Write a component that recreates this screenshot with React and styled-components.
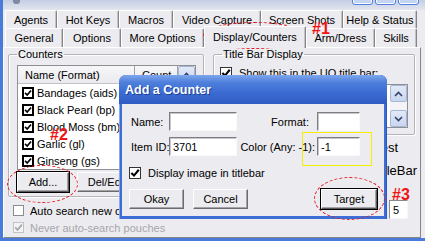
import React from "react";
import styled, { createGlobalStyle, css } from "styled-components";

const BG = "#ecebef";
const FRAME_BLUE = "#4a7bd9";

const GlobalStyle = createGlobalStyle`
  html, body { margin: 0; padding: 0; background: ${BG}; }
  body { font-family: "Liberation Sans", Arial, sans-serif; font-size: 11px; color: #000; }
  * { box-sizing: border-box; }
`;

const Screen = styled.div`
  position: relative;
  width: 425px;
  height: 241px;
  overflow: hidden;
  background: ${BG};
`;

const Frame = styled.div`
  display: flex;
  flex-direction: column;
  width: 100%;
  height: 100%;
  border-left: 3px solid ${FRAME_BLUE};
  border-bottom: 3px solid ${FRAME_BLUE};
`;

const TopStrip = styled.div`
  flex: none;
  height: 10px;
  display: flex;
  align-items: flex-start;
  gap: 2px;
  padding: 0 6px 0 10px;
  overflow: hidden;
  background: linear-gradient(#c3cee4, #e3e5ee);
`;

const AppIcon = styled.div`
  width: 7px;
  height: 4px;
  border-radius: 0 0 3px 3px;
  background: #7d8aa2;
  filter: blur(0.6px);
  margin-right: auto;
`;

const WinBtn = styled.div`
  width: 21px;
  height: 20px;
  margin-top: -15px;
  border: 1px solid #4f7fe0;
  border-radius: 3px;
  background: #c4d5f3;
  box-shadow: inset 0 0 0 1px #fff;
`;

const TabArea = styled.div`
  flex: none;
  display: flex;
  flex-direction: column;
  padding-left: 2px;
`;

const TabRow = styled.div`
  display: flex;
  height: ${(p) => p.$h}px;
`;

const Tab = styled.div`
  flex: none;
  width: ${(p) => p.$w}px;
  height: 100%;
  display: flex;
  align-items: center;
  justify-content: center;
  white-space: nowrap;
  background: ${BG};
  border-top: 1px solid #fff;
  border-left: 1px solid #fff;
  border-right: 1px solid #858585;
  border-radius: 2px 2px 0 0;
  box-shadow: inset -1px 0 #c4c4c8;
  ${(p) =>
    p.$active &&
    css`
      position: relative;
      z-index: 1;
      height: calc(100% + 3px);
      margin-top: -2px;
      padding-bottom: 2px;
    `}
`;

const Panel = styled.div`
  flex: 1;
  margin-right: 4px;
  display: grid;
  grid-template-columns: 196px 207px;
  column-gap: 9px;
  align-items: start;
  padding-left: 4px;
  border-top: 1px solid #fff;
  border-left: 1px solid #fff;
  border-right: 1px solid #858585;
  border-bottom: 1px solid #858585;
`;

const Column = styled.div`
  display: flex;
  flex-direction: column;
`;

const GroupBox = styled.fieldset`
  margin: 0 ${(p) => p.$mr || 0}px 0 0;
  padding: 0 ${(p) => p.$px}px ${(p) => p.$pb}px;
  border: 1px solid #b4b3b8;
  border-radius: 2px;
  box-shadow: inset 1px 1px #fff, 1px 1px #fff;
  min-width: 0;
`;

const Legend = styled.legend`
  padding: 0 1px;
  margin-left: ${(p) => p.$ml || 0}px;
  line-height: 13px;
  font-size: 11px;
`;

const ListView = styled.div`
  margin-top: 4px;
  width: 179px;
  height: 105px;
  border: 1px solid #8e8f93;
  background: #fff;
  display: grid;
  grid-template-columns: 160px 17px;
`;

const ListMain = styled.div`
  display: flex;
  flex-direction: column;
`;

const Header = styled.div`
  display: grid;
  grid-template-columns: 117px 43px;
  height: 18px;
`;

const HeaderCell = styled.div`
  display: flex;
  align-items: center;
  padding-left: ${(p) => p.$pl}px;
  background: linear-gradient(#f7f7f9, #ebeaee);
  border-bottom: 1px solid #c3c3c7;
  border-right: 1px solid #a3a3a8;
  white-space: nowrap;
  overflow: hidden;
`;

const Row = styled.div`
  height: 17px;
  display: flex;
  align-items: center;
  gap: 3px;
  padding-left: 4px;
  white-space: nowrap;
`;

const ScrollBar = styled.div`
  display: flex;
  flex-direction: column;
  justify-content: space-between;
  background: #f4f4f7;
`;

const ScrollBtn = styled.div`
  height: 17px;
  display: flex;
  align-items: center;
  justify-content: center;
  background: linear-gradient(#e2e9f7, #c9d6ef);
  border: 1px solid #a6b6d6;
  border-radius: 2px;
`;

const ButtonRow = styled.div`
  display: flex;
  gap: ${(p) => p.$gap || 0}px;
  margin-top: ${(p) => p.$mt || 0}px;
`;

const Button = styled.div`
  flex: none;
  width: ${(p) => p.$w}px;
  height: 20px;
  display: flex;
  align-items: center;
  justify-content: center;
  white-space: nowrap;
  background: ${BG};
  border-top: 1px solid #fff;
  border-left: 1px solid #fff;
  border-right: 1px solid #6b6b6b;
  border-bottom: 1px solid #6b6b6b;
  box-shadow: inset -1px -1px #a3a3a8;
  margin-left: ${(p) => (p.$push ? "auto" : `${p.$ml || 0}px`)};
  ${(p) =>
    p.$default &&
    css`
      outline: 1px solid #000;
      outline-offset: 0;
      border-color: #fff #5a5a5a #5a5a5a #fff;
    `}
`;

const CheckRow = styled.div`
  display: flex;
  align-items: center;
  gap: ${(p) => p.$gap || 6}px;
  height: 13px;
  margin-top: ${(p) => p.$mt || 0}px;
  margin-left: ${(p) => p.$ml || 0}px;
  white-space: nowrap;
  color: ${(p) => (p.$disabled ? "#a7a6ab" : "#000")};
`;

const Box = styled.span`
  flex: none;
  width: ${(p) => p.$size}px;
  height: ${(p) => p.$size}px;
  display: inline-flex;
  align-items: center;
  justify-content: center;
  border: ${(p) => p.$bw}px solid ${(p) => p.$color};
  background: ${(p) => (p.$disabled ? "#f3f3f5" : "#fff")};
`;

function Check({ checked = true, disabled, size = 11, bw = 1, color = "#1d1d1d" }) {
  const inner = size - bw * 2;
  return (
    <Box $size={size} $bw={bw} $color={disabled ? "#c2c2c6" : color} $disabled={disabled}>
      {checked && (
        <svg width={inner} height={inner} viewBox="0 0 9 9">
          <path
            d="M1.2 4.4 L3.6 6.8 L7.9 1.6"
            fill="none"
            stroke={disabled ? "#a9a9ad" : "#000"}
            strokeWidth="1.9"
          />
        </svg>
      )}
    </Box>
  );
}

function Chevron({ up }) {
  return (
    <svg width="9" height="6" viewBox="0 0 9 6">
      <path
        d={up ? "M1 5 L4.5 1.5 L8 5" : "M1 1 L4.5 4.5 L8 1"}
        fill="none"
        stroke="#33416a"
        strokeWidth="1.6"
      />
    </svg>
  );
}

const TextArea = styled.div`
  margin: 5px 0 0 4px;
  height: 44px;
  border: 1px solid #8e8f93;
  background: #fff;
  display: flex;
  justify-content: flex-end;
`;

const SideScroll = styled.div`
  width: 17px;
  display: flex;
  flex-direction: column;
  justify-content: space-between;
  background: #f4f4f7;
`;

const TailRow = styled.div`
  display: flex;
  justify-content: flex-end;
  align-items: center;
  height: 13px;
  padding-right: ${(p) => p.$pr}px;
  margin-top: ${(p) => p.$mt}px;
  white-space: nowrap;
  font-size: 13px;
`;

const TailBox = styled.div`
  align-self: flex-end;
  margin: ${(p) => p.$mt}px 12px 0 0;
  width: 19px;
  height: 19px;
  display: flex;
  align-items: center;
  padding-left: 3px;
  background: #fff;
  border-top: 1px solid #8a8a8e;
  border-left: 1px solid #8a8a8e;
  border-right: 1px solid #f7f7f7;
  border-bottom: 1px solid #f7f7f7;
`;

/* ---------- Dialog ---------- */

const Dialog = styled.div`
  position: absolute;
  left: 119px;
  top: 75px;
  width: 268px;
  height: 144px;
  display: flex;
  flex-direction: column;
  border-radius: 7px 7px 0 0;
  overflow: hidden;
  background: #3d6ed6;
  box-shadow: inset 1px 0 #86a9ea, inset -1px 0 #2c58c0;
`;

const TitleBar = styled.div`
  flex: none;
  height: 29px;
  display: flex;
  align-items: center;
  padding-left: 6px;
  color: #fff;
  font-size: 12.5px;
  font-weight: bold;
  text-shadow: 1px 1px 0 #1d3f94;
  background: linear-gradient(#7ea6ec 0%, #4f80dc 25%, #3c6cd2 60%, #2f5cc4 100%);
`;

const DialogBody = styled.div`
  flex: 1;
  margin: 0 3px 3px;
  background: ${BG};
  padding: 8px 7px 0 7px;
  display: flex;
  flex-direction: column;
`;

const FormGrid = styled.div`
  display: grid;
  grid-template-columns: 38px 68px 80px 43px;
  grid-auto-rows: 19px;
  row-gap: 6px;
  margin-left: 2px;
  align-items: center;
`;

const Label = styled.span`
  white-space: nowrap;
  ${(p) =>
    p.$right &&
    css`
      justify-self: end;
      padding-right: ${p.$pr || 2}px;
    `}
`;

const Input = styled.div`
  height: 19px;
  display: flex;
  align-items: center;
  padding-left: 3px;
  background: #fff;
  border-top: 1px solid #7d7d82;
  border-left: 1px solid #7d7d82;
  border-right: 1px solid #fafafa;
  border-bottom: 1px solid #fafafa;
  box-shadow: inset 1px 1px #c7c7cc;
`;

/* ---------- Annotations ---------- */

const Ellipse = styled.div`
  position: absolute;
  left: ${(p) => p.$x}px;
  top: ${(p) => p.$y}px;
  width: ${(p) => p.$w}px;
  height: ${(p) => p.$h}px;
  border: 1px dashed #e8141c;
  border-radius: 50%;
`;

const Mark = styled.div`
  position: absolute;
  left: ${(p) => p.$x}px;
  top: ${(p) => p.$y}px;
  color: #f01414;
  font-family: "Liberation Sans", Arial, sans-serif;
  font-weight: bold;
  font-size: 16px;
  line-height: 16px;
`;

const Highlight = styled.div`
  position: absolute;
  left: 302px;
  top: 132px;
  width: 70px;
  height: 34px;
  border: 1px solid #f4f000;
`;

const tabsBack = [
  ["Agents", 52],
  ["Hot Keys", 62],
  ["Macros", 54],
  ["Video Capture", 88],
  ["Screen Shots", 82],
  ["Help & Status", 74],
];

const tabsFront = [
  ["General", 58],
  ["Options", 58],
  ["More Options", 83],
  ["Display/Counters", 102, true],
  ["Arm/Dress", 69],
  ["Skills", 42],
];

const counters = [
  "Bandages (aids)",
  "Black Pearl (bp)",
  "Blood Moss (bm)",
  "Garlic (gl)",
  "Ginseng (gs)",
];

export default function App() {
  return (
    <>
      <GlobalStyle />
      <Screen>
        <Frame>
          <TopStrip>
            <AppIcon />
            <WinBtn />
            <WinBtn />
            <WinBtn />
          </TopStrip>
          <TabArea>
            <TabRow $h={18}>
              {tabsBack.map(([t, w]) => (
                <Tab key={t} $w={w}>
                  {t}
                </Tab>
              ))}
            </TabRow>
            <TabRow $h={19}>
              {tabsFront.map(([t, w, a]) => (
                <Tab key={t} $w={w} $active={a}>
                  {t}
                </Tab>
              ))}
            </TabRow>
          </TabArea>
          <Panel>
            <Column>
              <GroupBox $px={8} $pb={4}>
                <Legend>Counters</Legend>
                <ListView>
                  <ListMain>
                    <Header>
                      <HeaderCell $pl={7}>Name (Format)</HeaderCell>
                      <HeaderCell $pl={7}>Count</HeaderCell>
                    </Header>
                    {counters.map((c) => (
                      <Row key={c}>
                        <Check size={12} bw={2} color="#000" />
                        {c}
                      </Row>
                    ))}
                  </ListMain>
                  <ScrollBar>
                    <ScrollBtn>
                      <Chevron up />
                    </ScrollBtn>
                    <ScrollBtn>
                      <Chevron />
                    </ScrollBtn>
                  </ScrollBar>
                </ListView>
                <ButtonRow $mt={2}>
                  <Button $w={52} $default>
                    Add...
                  </Button>
                  <Button $w={60} $ml={8}>
                    Del/Edit
                  </Button>
                </ButtonRow>
              </GroupBox>
              <CheckRow $mt={7} $ml={5}>
                <Check checked={false} color="#8c8c90" />
                Auto search new containers
              </CheckRow>
              <CheckRow $mt={4} $ml={5} $disabled>
                <Check disabled />
                Never auto-search pouches
              </CheckRow>
            </Column>
            <Column>
              <GroupBox $px={6} $pb={6} $mr={5}>
                <Legend $ml={2}>Title Bar Display</Legend>
                <CheckRow $mt={5} $gap={7}>
                  <Check size={12} color="#333" />
                  Show this in the UO title bar:
                </CheckRow>
                <TextArea>
                  <SideScroll>
                    <ScrollBtn>
                      <Chevron up />
                    </ScrollBtn>
                    <ScrollBtn>
                      <Chevron />
                    </ScrollBtn>
                  </SideScroll>
                </TextArea>
              </GroupBox>
              <TailRow $pr={22} $mt={6}>
                Highest
              </TailRow>
              <TailRow $pr={3} $mt={10}>
                TitleBar
              </TailRow>
              <TailBox $mt={23}>5</TailBox>
            </Column>
          </Panel>
        </Frame>

        <Dialog>
          <TitleBar>Add a Counter</TitleBar>
          <DialogBody>
            <FormGrid>
              <Label>Name:</Label>
              <Input />
              <Label $right $pr={8}>
                Format:
              </Label>
              <Input />
              <Label>Item ID:</Label>
              <Input>3701</Input>
              <Label $right>Color (Any: -1):</Label>
              <Input>-1</Input>
            </FormGrid>
            <CheckRow $mt={10} $gap={7}>
              <Check size={12} color="#333" />
              Display image in titlebar
            </CheckRow>
            <ButtonRow $mt={10} $gap={9}>
              <Button $w={55}>Okay</Button>
              <Button $w={55}>Cancel</Button>
              <Button $w={56} $default $push>
                Target
              </Button>
            </ButtonRow>
          </DialogBody>
        </Dialog>

        <Ellipse $x={203} $y={22} $w={102} $h={27} />
        <Mark $x={312} $y={21}>#1</Mark>
        <Ellipse $x={7} $y={165} $w={71} $h={38} />
        <Mark $x={50} $y={127}>#2</Mark>
        <Ellipse $x={314} $y={177} $w={71} $h={43} />
        <Mark $x={392} $y={187}>#3</Mark>
        <Highlight />
      </Screen>
    </>
  );
}
